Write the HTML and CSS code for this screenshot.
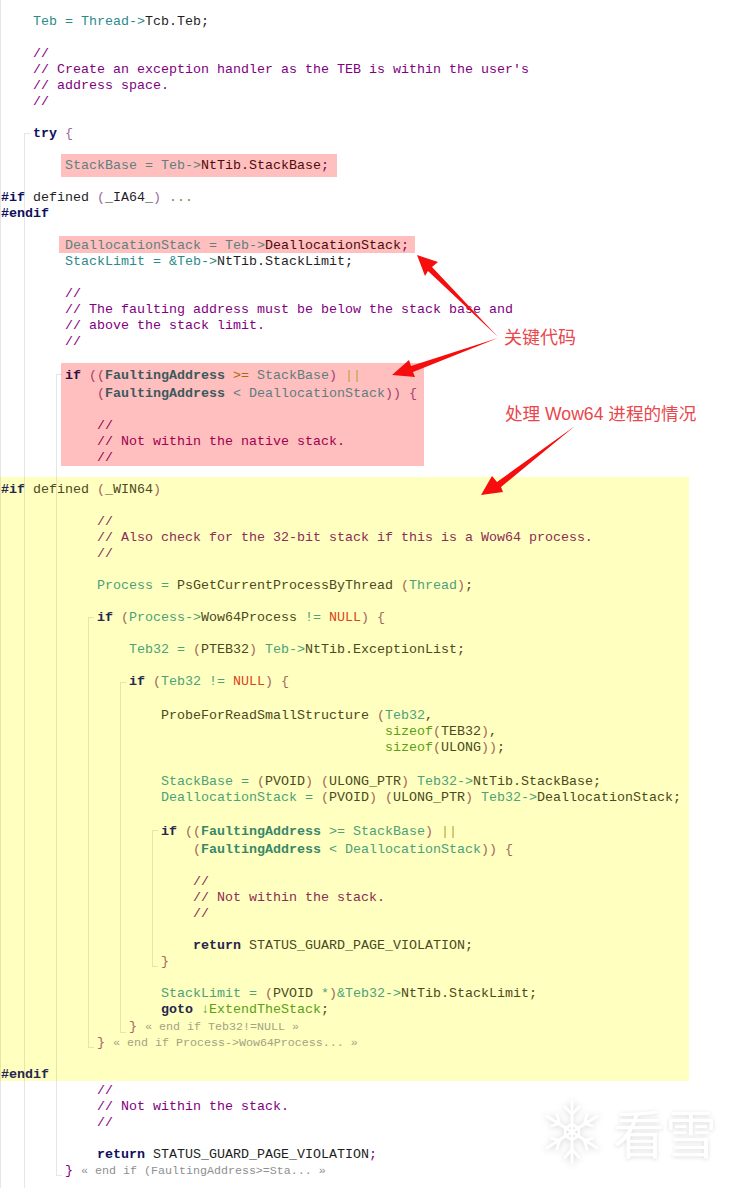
FILE: index.html
```html
<!DOCTYPE html>
<html lang="zh">
<head>
<meta charset="utf-8">
<title>ExtendTheStack</title>
<link rel="stylesheet" href="styles.css">
</head>
<body>
<main class="code">
<div class="ln">    <span class="v">Teb = Thread-&gt;</span><span class="i">Tcb.Teb</span><span class="s">;</span></div>
<div class="ln"></div>
<div class="ln">    <span class="c">//</span></div>
<div class="ln">    <span class="c">// Create an exception handler as the TEB is within the user's</span></div>
<div class="ln">    <span class="c">// address space.</span></div>
<div class="ln">    <span class="c">//</span></div>
<div class="ln"></div>
<div class="ln">    <span class="k">try</span> <span class="p">{</span></div>
<div class="ln"></div>
<div class="ln mark mark-base"><span class="v">StackBase = Teb-&gt;</span><span class="i">NtTib.StackBase</span><span class="s">;</span></div>
<div class="ln"></div>
<div class="ln"><span class="k">#if</span> <span class="i">defined</span> <span class="p">(</span><span class="i">_IA64_</span><span class="p">)</span> <span class="d">...</span></div>
<div class="ln"><span class="k">#endif</span></div>
<div class="ln"></div>
<div class="ln mark mark-dealloc"><span class="v">DeallocationStack = Teb-&gt;</span><span class="i">DeallocationStack</span><span class="s">;</span></div>
<div class="ln">        <span class="v">StackLimit = &amp;Teb-&gt;</span><span class="i">NtTib.StackLimit</span><span class="s">;</span></div>
<div class="ln"></div>
<div class="ln">        <span class="c">//</span></div>
<div class="ln">        <span class="c">// The faulting address must be below the stack base and</span></div>
<div class="ln">        <span class="c">// above the stack limit.</span></div>
<div class="ln">        <span class="c">//</span></div>
<div class="gap-pink"></div>

<section class="pink">
<div class="ln t"><span class="k">if</span> <span class="p">((</span><span class="b">FaultingAddress</span> <span class="o">&gt;=</span> <span class="v">StackBase</span><span class="p">)</span> <span class="o2">||</span></div>
<div class="ln">    <span class="p">(</span><span class="b">FaultingAddress</span> <span class="v">&lt; DeallocationStack</span><span class="p">)) {</span></div>
<div class="ln"></div>
<div class="ln">    <span class="c">//</span></div>
<div class="ln">    <span class="c">// Not within the native stack.</span></div>
<div class="ln">    <span class="c">//</span></div>
</section>
<div class="gap-yellow"></div>

<section class="yellow">
<div class="ln"><span class="k">#if</span> <span class="i">defined</span> <span class="p">(</span><span class="i">_WIN64</span><span class="p">)</span></div>
<div class="ln"></div>
<div class="ln">            <span class="c">//</span></div>
<div class="ln">            <span class="c">// Also check for the 32-bit stack if this is a Wow64 process.</span></div>
<div class="ln">            <span class="c">//</span></div>
<div class="ln"></div>
<div class="ln">            <span class="v">Process = </span><span class="i">PsGetCurrentProcessByThread</span> <span class="p">(</span><span class="v">Thread</span><span class="p">)</span><span class="s">;</span></div>
<div class="ln"></div>
<div class="ln">            <span class="k">if</span> <span class="p">(</span><span class="v">Process-&gt;</span><span class="i">Wow64Process</span> <span class="v">!=</span> <span class="n">NULL</span><span class="p">) {</span></div>
<div class="ln"></div>
<div class="ln">                <span class="v">Teb32 =</span> <span class="p">(</span><span class="i">PTEB32</span><span class="p">)</span> <span class="v">Teb-&gt;</span><span class="i">NtTib.ExceptionList</span><span class="s">;</span></div>
<div class="ln"></div>
<div class="ln">                <span class="k">if</span> <span class="p">(</span><span class="v">Teb32 !=</span> <span class="n">NULL</span><span class="p">) {</span></div>
<div class="ln t"></div>
<div class="ln">                    <span class="i">ProbeForReadSmallStructure</span> <span class="p">(</span><span class="v">Teb32</span><span class="s">,</span></div>
<div class="ln">                                                <span class="z">sizeof</span><span class="p">(</span><span class="i">TEB32</span><span class="p">)</span><span class="s">,</span></div>
<div class="ln">                                                <span class="z">sizeof</span><span class="p">(</span><span class="i">ULONG</span><span class="p">))</span><span class="s">;</span></div>
<div class="ln t"></div>
<div class="ln">                    <span class="v">StackBase =</span> <span class="p">(</span><span class="i">PVOID</span><span class="p">)</span> <span class="p">(</span><span class="i">ULONG_PTR</span><span class="p">)</span> <span class="v">Teb32-&gt;</span><span class="i">NtTib.StackBase</span><span class="s">;</span></div>
<div class="ln">                    <span class="v">DeallocationStack =</span> <span class="p">(</span><span class="i">PVOID</span><span class="p">)</span> <span class="p">(</span><span class="i">ULONG_PTR</span><span class="p">)</span> <span class="v">Teb32-&gt;</span><span class="i">DeallocationStack</span><span class="s">;</span></div>
<div class="ln t"></div>
<div class="ln t">                    <span class="k">if</span> <span class="p">((</span><span class="b">FaultingAddress</span> <span class="v">&gt;= StackBase</span><span class="p">)</span> <span class="o2">||</span></div>
<div class="ln">                        <span class="p">(</span><span class="b">FaultingAddress</span> <span class="v">&lt; DeallocationStack</span><span class="p">)) {</span></div>
<div class="ln"></div>
<div class="ln">                        <span class="c">//</span></div>
<div class="ln">                        <span class="c">// Not within the stack.</span></div>
<div class="ln">                        <span class="c">//</span></div>
<div class="ln"></div>
<div class="ln">                        <span class="k">return</span> <span class="i">STATUS_GUARD_PAGE_VIOLATION</span><span class="s">;</span></div>
<div class="ln">                    <span class="p">}</span></div>
<div class="ln"></div>
<div class="ln">                    <span class="v">StackLimit =</span> <span class="p">(</span><span class="i">PVOID</span> <span class="v">*</span><span class="p">)</span><span class="v">&amp;Teb32-&gt;</span><span class="i">NtTib.StackLimit</span><span class="s">;</span></div>
<div class="ln l17">                    <span class="k">goto</span> <span class="z">↓ExtendTheStack</span><span class="s">;</span></div>
<div class="ln">                <span class="p">}</span> <span class="f">« end if Teb32!=NULL »</span></div>
<div class="ln">            <span class="p">}</span> <span class="f">« end if Process-&gt;Wow64Process... »</span></div>
<div class="ln"></div>
<div class="ln"><span class="k">#endif</span></div>
</section>

<div class="ln">            <span class="c">//</span></div>
<div class="ln">            <span class="c">// Not within the stack.</span></div>
<div class="ln">            <span class="c">//</span></div>
<div class="ln"></div>
<div class="ln">            <span class="k">return</span> <span class="i">STATUS_GUARD_PAGE_VIOLATION</span><span class="c">;</span></div>
<div class="ln">        <span class="c">}</span> <span class="f">« end if (FaultingAddress&gt;=Sta... »</span></div>
</main>

<div class="guide edge"></div>
<div class="guide g-try"></div>
<div class="guide g-if"></div>
<div class="guide g-proc"></div>
<div class="guide g-teb"></div>
<div class="guide g-fault"></div>

<svg class="arrows" viewBox="0 0 737 1188" aria-hidden="true">
  <polygon points="417,255 438,262 432,267 498,337 428,271 425,276"/>
  <polygon points="392,375 409,360 411,366 498,338 413,372 415,377"/>
  <polygon points="481,495 492,476 497,482 575,426 501,487 503,492"/>
</svg>
<div class="note note-key">关键代码</div>
<div class="note note-wow">处理 Wow64 进程的情况</div>

<div class="mark-logo">
  <svg class="flake" viewBox="0 0 60 72" aria-hidden="true">
    <g>
      <path d="M30 3V69"/>
      <path d="M3 19L57 53"/>
      <path d="M57 19L3 53"/>
      <path d="M22 9L30 18L38 9"/>
      <path d="M22 63L30 54L38 63"/>
      <path d="M8 30L17 27L14 17"/>
      <path d="M52 30L43 27L46 17"/>
      <path d="M8 42L17 45L14 55"/>
      <path d="M52 42L43 45L46 55"/>
      <path d="M30 28L37 32V40L30 44L23 40V32Z"/>
    </g>
  </svg>
  <span class="brand">看雪</span>
</div>
</body>
</html>
```

FILE: styles.css
```css
html, body {
  margin: 0;
  padding: 0;
  background: #fff;
}

body {
  position: relative;
  width: 737px;
  height: 1188px;
  overflow: hidden;
}

.code {
  --var: #2b8a8c;
  --id: #1f1f1f;
  --semi: #222;
  --cm: #800080;
  --kw: #10105e;
  --par: #9a6a9a;
  --bold: #2b8a8c;
  --fold: #8f8f8f;
  --nul: #e0401c;
  --sz: #5aa018;
  padding-top: 12px;
  font-family: "Liberation Mono", "DejaVu Sans Mono", monospace;
  font-size: 13.33px;
  line-height: 19px;
}

.ln {
  height: 16px;
  padding-left: 1px;
  white-space: pre;
}

.t { height: 18px; }
.l17 { height: 17px; }

.v { color: var(--var); }
.i { color: var(--id); }
.s { color: var(--semi); }
.c { color: var(--cm); }
.k { color: var(--kw); font-weight: 700; }
.p { color: var(--par); }
.b { color: var(--bold); font-weight: 700; }
.f { color: var(--fold); font-size: 11.66px; }
.d { color: #76884e; }
.n { color: var(--nul); }
.z { color: var(--sz); }
.o { color: #a56a10; }
.o2 { color: #b5a838; }

.mark {
  --var: #5f7f80;
  --id: #520a0a;
  --semi: #800050;
  background: #ffbfbf;
  position: relative;
  width: fit-content;
}

.mark-base {
  margin: -2px 0 -5px 61px;
  padding: 2px 8px 5px 4px;
}

.mark-dealloc {
  margin: 0 0 -1px 59px;
  padding: 0 6px 1px 6px;
}

.gap-pink { height: 15px; }
.gap-yellow { height: 11px; }

.pink {
  --var: #5f7d7e;
  --id: #520a0a;
  --cm: #a0004e;
  --kw: #2c0f46;
  --par: #a8406a;
  --bold: #3a5a5c;
  margin-left: 61px;
  width: 363px;
  padding: 3px 0 2px;
  background: #ffbfbf;
}

.pink .ln { padding-left: 4px; }

.yellow {
  --var: #4ba27c;
  --id: #4b4a22;
  --semi: #5a3a2a;
  --cm: #8c2c58;
  --kw: #26264e;
  --par: #a5665c;
  --bold: #37886a;
  --fold: #a3a384;
  width: 689px;
  padding-top: 3px;
  background: #ffffbf;
}

.guide {
  position: absolute;
  box-sizing: border-box;
  width: 6px;
  border: 0 solid rgba(90, 90, 60, 0.15);
  border-left-width: 1px;
  border-top-width: 1px;
  border-bottom-width: 1px;
}

.edge {
  left: 0;
  top: 0;
  width: 1px;
  height: 1188px;
  border-width: 0 0 0 1px;
}

.g-try { left: 24px; top: 133px; height: 1056px; border-bottom-width: 0; }
.g-if { left: 56px; top: 374px; height: 802px; }
.g-proc { left: 88px; top: 617px; height: 431px; }
.g-teb { left: 120px; top: 682px; height: 351px; }
.g-fault { left: 152px; top: 830px; height: 137px; }

.arrows {
  position: absolute;
  left: 0;
  top: 0;
  width: 737px;
  height: 1188px;
  fill: #f60d0d;
}

.note {
  position: absolute;
  color: #e8474c;
  font-family: "Liberation Sans", "Noto Sans CJK SC", sans-serif;
  font-size: 18px;
  line-height: 22px;
  white-space: nowrap;
}

.note-key { left: 504px; top: 327px; }
.note-wow { left: 505px; top: 403px; font-size: 17.6px; }

.mark-logo {
  position: absolute;
  left: 543px;
  top: 1097px;
  display: flex;
  align-items: center;
  gap: 12px;
}

.flake {
  width: 58px;
  height: 70px;
  fill: none;
  stroke: #fff;
  stroke-width: 3;
  filter: drop-shadow(0 1px 3px rgba(0, 0, 0, 0.16));
}

.brand {
  color: #fff;
  font-family: "Noto Sans CJK SC", sans-serif;
  font-size: 52px;
  line-height: 60px;
  text-shadow: 0 1px 4px rgba(0, 0, 0, 0.14);
  white-space: nowrap;
}
```
